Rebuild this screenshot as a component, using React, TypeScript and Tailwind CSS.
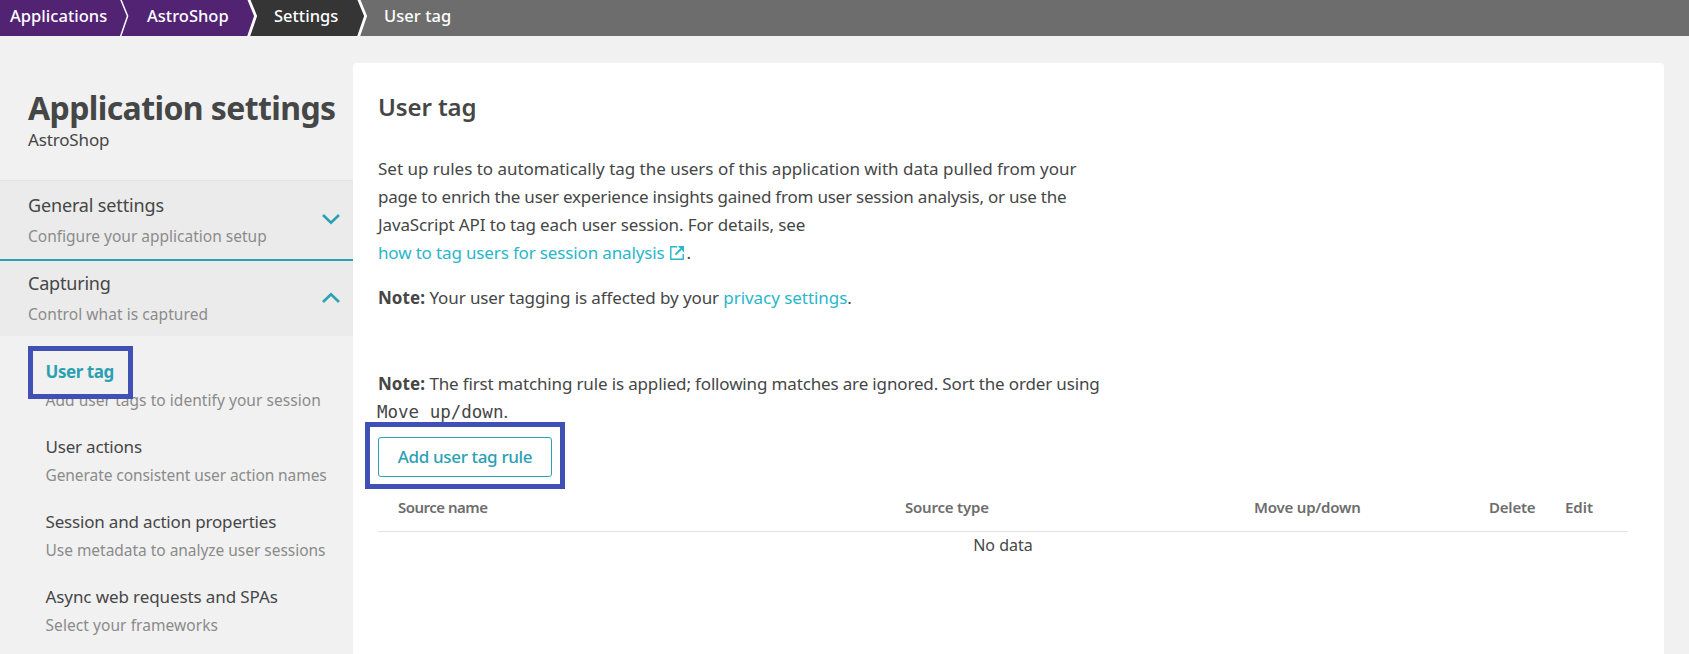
import React from "react";

type SeparatorProps = { from: string; to: string; thickness: number };

function Separator({ from, to, thickness }: SeparatorProps) {
  return (
    <svg width="12" height="36" viewBox="0 0 12 36" className="block shrink-0">
      <rect width="12" height="36" fill={to} />
      <path d="M0 0H3L10 16L3 36H0Z" fill={from} />
      <path d="M2.6 -1L9.6 16L2.4 37" fill="none" stroke="#fff" strokeWidth={thickness} />
    </svg>
  );
}

function Breadcrumbs() {
  return (
    <nav className="flex h-9 bg-[#6d6d6d] text-[16.5px] leading-[31px] font-medium text-white whitespace-nowrap">
      <a className="w-[118px] bg-[#522273] pl-2.5 tracking-[0.03px]">Applications</a>
      <Separator from="#522273" to="#522273" thickness={1.5} />
      <a className="w-[116px] bg-[#522273] pl-[17px]">AstroShop</a>
      <Separator from="#522273" to="#353535" thickness={2.8} />
      <a className="w-[98px] bg-[#353535] pl-4">Settings</a>
      <Separator from="#353535" to="#6d6d6d" thickness={2.8} />
      <span className="pl-4 tracking-[0.05px]">User tag</span>
    </nav>
  );
}

function Chevron({ up }: { up?: boolean }) {
  return (
    <svg width="20" height="12" viewBox="0 0 20 12" fill="none" stroke="#2ba0b3" strokeWidth="2.6" className="-mt-0.5 shrink-0">
      <path d={up ? "M2 10L10 2.2L18 10" : "M2 2L10 9.8L18 2"} />
    </svg>
  );
}

function ExternalIcon() {
  return (
    <svg width="14" height="14" viewBox="0 0 14 14" fill="none" stroke="#2ab6ca" className="ml-1.5 mr-0.5 inline-block align-[-1px]">
      <path d="M7 0.8H0.8V13.2H13.2V8" strokeWidth="1.4" />
      <path d="M5.4 8.6L11 3" strokeWidth="1.8" />
      <path d="M7.8 0H14V6.2Z" fill="#2ab6ca" stroke="none" />
    </svg>
  );
}

const items = [
  { title: "User tag", text: "Add user tags to identify your session", a: "font-bold text-[#2ba0b3] tracking-[-0.45px]", b: "tracking-[0.05px]" },
  { title: "User actions", text: "Generate consistent user action names", a: "tracking-[-0.2px]", b: "tracking-[-0.08px]" },
  { title: "Session and action properties", text: "Use metadata to analyze user sessions", a: "tracking-[-0.18px]", b: "tracking-[-0.03px]" },
  { title: "Async web requests and SPAs", text: "Select your frameworks", a: "tracking-[-0.1px]", b: "tracking-[0.07px]" },
];

function Sidebar() {
  return (
    <aside className="w-[353px] shrink-0 whitespace-nowrap">
      <header className="h-36 pt-[51px] pl-7">
        <h1 className="text-[32px] leading-[42px] font-bold tracking-[-0.6px]">Application settings</h1>
        <p className="text-[17px] leading-6 -mt-px tracking-[-0.15px]">AstroShop</p>
      </header>
      <section className="flex h-[79px] items-center justify-between border-t border-[#e3e3e3] bg-[#ebebeb] pr-3 pl-7">
        <div className="mt-0.5">
          <h2 className="text-[18px] leading-[31px] tracking-[-0.15px]">General settings</h2>
          <p className="text-[15.5px] leading-[31px] text-[#8b8b8b]">Configure your application setup</p>
        </div>
        <Chevron />
      </section>
      <section className="flex h-[77px] items-center justify-between border-t-2 border-[#2ba0b3] bg-[#ebebeb] pr-3 pl-7">
        <div className="mt-px">
          <h2 className="text-[18px] leading-[31px] tracking-[-0.2px]">Capturing</h2>
          <p className="text-[15.5px] leading-[31px] text-[#8b8b8b] tracking-[0.06px]">Control what is captured</p>
        </div>
        <Chevron up />
      </section>
      <div className="relative">
        <ul className="pt-[22px] pl-[45.5px]">
          {items.map((item) => (
            <li key={item.title} className="h-[75px]">
              <div className={`text-[17px] leading-7 ${item.a}`}>{item.title}</div>
              <div className={`text-[15.5px] leading-7 text-[#8b8b8b] ${item.b}`}>{item.text}</div>
            </li>
          ))}
        </ul>
        <div className="absolute top-[10px] left-7 h-[53px] w-[105px] border-5 border-[#4150b5]" />
      </div>
    </aside>
  );
}

function Content() {
  return (
    <main className="mt-[27px] h-[591px] w-[1311px] rounded-t-[4px] bg-white pt-7 pl-[25px]">
      <h2 className="text-[24px] leading-8 font-semibold tracking-[-0.1px]">User tag</h2>
      <div className="mt-8 text-[17px] leading-7 whitespace-nowrap">
        <div className="tracking-[-0.02px]">Set up rules to automatically tag the users of this application with data pulled from your</div>
        <div className="tracking-[-0.22px]">page to enrich the user experience insights gained from user session analysis, or use the</div>
        <div className="tracking-[-0.13px]">JavaScript API to tag each user session. For details, see</div>
        <div>
          <a className="text-[#2ab6ca] tracking-[-0.15px]">how to tag users for session analysis</a>
          <ExternalIcon />.
        </div>
        <p className="mt-[17px]">
          <b className="tracking-[0.05px]">Note:</b> <span className="tracking-[-0.1px]">Your user tagging is affected by your </span>
          <a className="text-[#2ab6ca] tracking-[-0.05px]">privacy settings</a>.
        </p>
        <p className="mt-[58px]">
          <b className="tracking-[0.05px]">Note:</b>{" "}
          <span className="tracking-[-0.15px]">The first matching rule is applied; following matches are ignored. Sort the order using</span>
        </p>
        <div>
          <code className="-ml-px font-['DejaVu_Sans_Mono',monospace] text-[17.5px] leading-none">Move up/down</code>.
        </div>
      </div>
      <div className="relative mt-[11px] w-[174px]">
        <button className="block h-10 w-full rounded-[3px] border border-[#2ba0b3] bg-white text-[17px] font-medium whitespace-nowrap text-[#2ba0b3] tracking-[-0.35px]">
          Add user tag rule
        </button>
        <div className="absolute -top-[15px] -left-[13px] h-[67px] w-[200px] border-5 border-[#4150b5]" />
      </div>
      <div className="mt-2 w-[1250px]">
        <div className="grid h-[47px] grid-cols-[507px_349px_235px_76px_1fr] border-b border-[#e3e3e3] pl-5 text-[15px] leading-[45px] font-semibold whitespace-nowrap text-[#6d6d6d]">
          <span className="tracking-[-0.5px]">Source name</span>
          <span className="tracking-[-0.2px]">Source type</span>
          <span className="tracking-[-0.2px]">Move up/down</span>
          <span className="tracking-[-0.2px]">Delete</span>
          <span>Edit</span>
        </div>
        <div className="text-center text-[16px] leading-[26px]">No data</div>
      </div>
    </main>
  );
}

export default function App() {
  return (
    <div className="h-[654px] w-[1689px] overflow-hidden bg-[#f1f1f1] font-['Noto_Sans',sans-serif] text-[#454646]">
      <Breadcrumbs />
      <div className="flex">
        <Sidebar />
        <Content />
      </div>
    </div>
  );
}
